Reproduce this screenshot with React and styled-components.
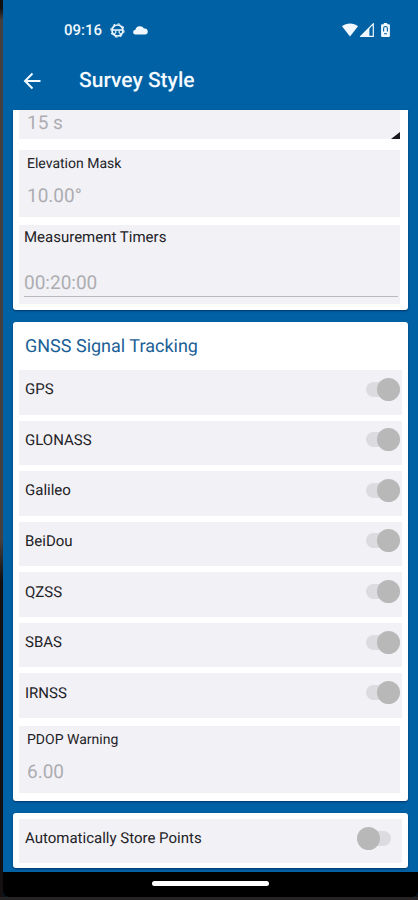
import React, { useState } from "react";

import styled, { createGlobalStyle } from "styled-components";

const GlobalStyle = createGlobalStyle`
    *, *::before, *::after {
        box-sizing: border-box;
    }

    body {
        margin: 0;
        background: #000;
        font-family: Roboto, "Liberation Sans", sans-serif;
        text-rendering: geometricPrecision;
    }
`;

const Bezel = styled.div`
    min-height: 100vh;
    display: flex;
    padding: 0 0 3px 3px;
    background:
        linear-gradient(#262425, #262425) bottom / 100% 3px no-repeat,
        linear-gradient(#120f10 0 8px, #453f40 20px 540px, #141011 580px 100%);
`;

const Screen = styled.div`
    flex: 1;
    min-width: 0;
    display: flex;
    flex-direction: column;
    background: #0062a5;
    border-radius: 0 0 5px 5px;
    overflow: hidden;
`;

const StatusBar = styled.div`
    display: flex;
    align-items: center;
    justify-content: space-between;
    height: 60px;
    padding: 0 28px 0 61px;
    color: #f1f8ff;
`;

const StatusGroup = styled.div`
    display: flex;
    align-items: center;
    gap: ${(props) => props.$gap}px;
`;

const Clock = styled.span`
    font-size: 15px;
    font-weight: 500;
    line-height: 20px;
`;

const AppBar = styled.header`
    display: flex;
    align-items: center;
    gap: 36px;
    height: 50px;
    padding: 0 18px 8px;
    color: #f4faff;
`;

const BackButton = styled.button`
    display: flex;
    padding: 0;
    border: 0;
    background: none;
    color: inherit;
    cursor: pointer;
`;

const Title = styled.h1`
    margin: 0;
    font-size: 21px;
    font-weight: 500;
    line-height: 28px;
`;

const Content = styled.main`
    flex: 1;
    display: flex;
    flex-direction: column;
    gap: 12px;
    padding: 0 10px 4px;
`;

const Card = styled.section`
    padding: ${(props) => props.$padding};
    border-radius: ${(props) => (props.$cut ? "0 0 3px 3px" : "3px")};
    background: #fff;
    box-shadow: 0 1px 2px rgba(0, 20, 60, 0.6);
`;

const CardTitle = styled.h2`
    margin: 0;
    padding: 11px 6px 9px;
    color: #1b5f96;
    font-size: 18px;
    font-weight: 400;
    line-height: 28px;
`;

const Field = styled.div`
    display: flex;
    flex-direction: column;
    margin: ${(props) => props.$margin || "0 2px 0 0"};
    padding: ${(props) => props.$padding || "4px 8px 0"};
    background: #f2f1f6;
`;

const Label = styled.label`
    color: #222226;
    font-size: ${(props) => (props.$large ? 15 : 14)}px;
    line-height: 20px;
`;

const Value = styled.input`
    width: 100%;
    height: 43px;
    padding: 0;
    border: 0;
    border-radius: 0;
    outline: 0;
    background: none;
    color: #adadb1;
    font-family: inherit;
    font-size: 19px;
    text-rendering: inherit;
`;

const UnderlinedValue = styled(Value)`
    height: 29px;
    margin-top: 21px;
    border-bottom: 1px solid #b9b9be;
`;

const SpinnerField = styled.div`
    display: flex;
    align-items: flex-end;
    margin-right: 2px;
    padding-left: 8px;
    background: #f2f1f6;
`;

const Select = styled.select`
    flex: 1;
    height: 29px;
    padding: 0 0 5px;
    border: 0;
    outline: 0;
    appearance: none;
    background: none;
    color: #adadb1;
    font-family: inherit;
    font-size: 19px;
    text-rendering: inherit;
`;

const Switches = styled.div`
    display: grid;
    grid-auto-rows: 1fr;
    gap: 6px;
    min-height: 348px;
`;

const SwitchRow = styled.div`
    display: flex;
    align-items: center;
    justify-content: space-between;
    min-height: 44px;
    padding: 0 ${(props) => props.$inset || 2}px 6px 6px;
    background: #f2f1f6;
`;

const Switch = styled.input`
    display: flex;
    align-items: center;
    justify-content: ${(props) => (props.checked ? "flex-end" : "flex-start")};
    width: 34px;
    height: 15px;
    margin: 0;
    appearance: none;
    border-radius: 8px;
    background: #dcdbdf;
    cursor: pointer;

    &::before {
        content: "";
        flex: none;
        width: 23px;
        height: 23px;
        border-radius: 50%;
        background: #b8b8b9;
    }
`;

const NavBar = styled.footer`
    display: flex;
    justify-content: center;
    height: 25px;
    padding-top: 9px;
    background: #000;
`;

const HomeHandle = styled.div`
    width: 28%;
    height: 5px;
    border-radius: 3px;
    background: #fff;
`;

const WheelIcon = () => (
    <svg width="15" height="15" viewBox="0 0 15 15" fill="none" stroke="currentColor" aria-hidden="true">
        <circle cx="7.5" cy="7.5" r="5.5" strokeWidth="1.7" />
        <circle cx="7.5" cy="7.5" r="6.7" strokeWidth="1" strokeDasharray="2.6 2.66" />
        <path d="M2 7h11" strokeWidth="1.5" />
        <path d="M5.8 7.4v2.2l-1.6 1.6M9.2 7.4v2.2l1.6 1.6" strokeWidth="1.2" />
    </svg>
);

const CloudIcon = () => (
    <svg width="15" height="10" viewBox="0 0 15 10" fill="currentColor" aria-hidden="true">
        <path d="M2.6 9.5A2.4 2.4 0 0 1 2.4 4.7 4.7 4.7 0 0 1 11 3.6 3 3 0 0 1 12.4 9.5Z" />
    </svg>
);

const WifiIcon = () => (
    <svg width="16" height="14" viewBox="0 0 16 14" fill="currentColor" aria-hidden="true">
        <path d="M0 3.2C4.5-.4 11.5-.4 16 3.2L8 13.5Z" />
    </svg>
);

const SignalIcon = () => (
    <svg width="14" height="14" viewBox="0 0 14 14" aria-hidden="true">
        <path d="M.8 13.3H13.3V.8Z" fill="none" stroke="currentColor" strokeWidth="1.2" />
        <path d="M0 13.7H9.4V4.3Z" fill="currentColor" />
        <path d="M10.8 5v6" stroke="#0062a5" strokeWidth="1.4" />
    </svg>
);

const BatteryIcon = () => (
    <svg width="9" height="14" viewBox="0 0 9 14" aria-hidden="true">
        <path
            d="M2.8 0h3.4v1.2H8a.9.9 0 0 1 .9.9v11a.9.9 0 0 1-.9.9H1a.9.9 0 0 1-.9-.9v-11a.9.9 0 0 1 .9-.9h1.8Z"
            fill="currentColor"
        />
        <path d="M2.6 8.6V5.4a1.9 1.9 0 0 1 3.8 0v3.2M3 10.8h3" fill="none" stroke="#0062a5" strokeWidth="1.1" />
    </svg>
);

const ArrowIcon = () => (
    <svg width="22" height="22" viewBox="0 0 22 22" fill="none" stroke="currentColor" strokeWidth="2" aria-hidden="true">
        <path d="M19.5 11H4M11.5 3.5 4 11l7.5 7.5" />
    </svg>
);

const CornerIcon = () => (
    <svg width="9" height="7" viewBox="0 0 9 7" fill="#18161f" aria-hidden="true">
        <path d="M9 0v7H0Z" />
    </svg>
);

const ToggleRow = ({ id, label, checked, onChange, inset }) => (
    <SwitchRow $inset={inset}>
        <Label htmlFor={id} $large>
            {label}
        </Label>
        <Switch id={id} type="checkbox" role="switch" checked={checked} onChange={onChange} />
    </SwitchRow>
);

const SIGNALS = ["GPS", "GLONASS", "Galileo", "BeiDou", "QZSS", "SBAS", "IRNSS"];

export default function App() {
    const [signals, setSignals] = useState(() => Object.fromEntries(SIGNALS.map((name) => [name, true])));
    const [autoStore, setAutoStore] = useState(false);

    return (
        <Bezel>
            <GlobalStyle />
            <Screen>
                <StatusBar>
                    <StatusGroup $gap={8}>
                        <Clock>09:16</Clock>
                        <WheelIcon />
                        <CloudIcon />
                    </StatusGroup>
                    <StatusGroup $gap={2}>
                        <WifiIcon />
                        <StatusGroup $gap={7}>
                            <SignalIcon />
                            <BatteryIcon />
                        </StatusGroup>
                    </StatusGroup>
                </StatusBar>
                <AppBar>
                    <BackButton type="button" aria-label="Back">
                        <ArrowIcon />
                    </BackButton>
                    <Title>Survey Style</Title>
                </AppBar>
                <Content>
                    <Card $cut $padding="0 6px 6px">
                        <SpinnerField>
                            <Select aria-label="Interval" defaultValue="15">
                                <option value="15">15 s</option>
                            </Select>
                            <CornerIcon />
                        </SpinnerField>
                        <Field $margin="11px 2px 8px 0">
                            <Label htmlFor="mask">Elevation Mask</Label>
                            <Value id="mask" defaultValue="10.00°" />
                        </Field>
                        <Field $padding="2px 2px 7px 5px">
                            <Label htmlFor="timers" $large>
                                Measurement Timers
                            </Label>
                            <UnderlinedValue id="timers" defaultValue="00:20:00" />
                        </Field>
                    </Card>
                    <Card $padding="0 6px 8px">
                        <CardTitle>GNSS Signal Tracking</CardTitle>
                        <Switches>
                            {SIGNALS.map((name) => (
                                <ToggleRow
                                    key={name}
                                    id={name.toLowerCase()}
                                    label={name}
                                    checked={signals[name]}
                                    onChange={() => setSignals({ ...signals, [name]: !signals[name] })}
                                />
                            ))}
                        </Switches>
                        <Field $margin="8px 2px 0 0">
                            <Label htmlFor="pdop">PDOP Warning</Label>
                            <Value id="pdop" defaultValue="6.00" />
                        </Field>
                    </Card>
                    <Card $padding="6px 6px 5px">
                        <ToggleRow
                            id="auto-store"
                            label="Automatically Store Points"
                            checked={autoStore}
                            onChange={() => setAutoStore(!autoStore)}
                            inset={11}
                        />
                    </Card>
                </Content>
                <NavBar>
                    <HomeHandle />
                </NavBar>
            </Screen>
        </Bezel>
    );
}
